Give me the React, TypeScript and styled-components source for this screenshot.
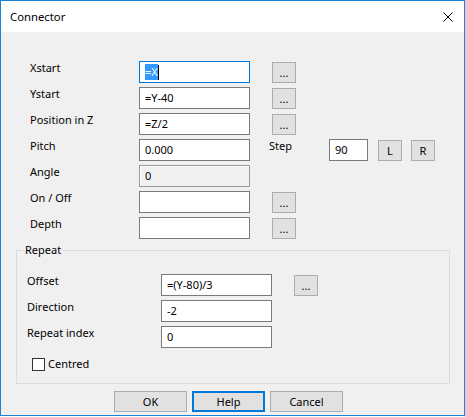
import React from "react";
import styled, { createGlobalStyle, css } from "styled-components";

const GlobalStyle = createGlobalStyle`
  html, body {
    margin: 0;
    padding: 0;
    background: #ffffff;
  }
  * {
    box-sizing: border-box;
  }
`;

const FONT = `"Noto Sans", "Liberation Sans", sans-serif`;

const Window = styled.div`
  width: 465px;
  height: 416px;
  border: 1px solid #1883d7;
  display: flex;
  flex-direction: column;
  font-family: ${FONT};
  font-size: 11px;
  color: #000;
  background: #f0f0f0;
`;

const TitleBar = styled.div`
  height: 31px;
  background: #ffffff;
  display: flex;
  align-items: center;
  justify-content: space-between;
  padding: 0 11px 0 9px;
  font-size: 11.3px;
`;

const CloseIcon = styled.svg`
  width: 10px;
  height: 10px;
  margin-top: 1px;
`;

const Body = styled.div`
  flex: 1;
  padding: 29px 0 0 0;
`;

const Form = styled.div`
  padding-left: 29px;
`;

const Row = styled.div`
  display: flex;
  align-items: flex-start;
  height: 22px;
  margin-bottom: 4px;
`;

const Label = styled.div<{ $width: number }>`
  width: ${(p) => p.$width}px;
  line-height: 14px;
  white-space: nowrap;
`;

const TextBox = styled.div<{ $width?: number; $focused?: boolean; $disabled?: boolean }>`
  width: ${(p) => p.$width ?? 111}px;
  height: 22px;
  border: 1px solid #7a7a7a;
  background: #ffffff;
  padding: 0 0 0 5px;
  display: flex;
  align-items: center;
  line-height: 14px;
  white-space: nowrap;
  ${(p) =>
    p.$focused &&
    css`
      border-color: #0078d7;
    `}
  ${(p) =>
    p.$disabled &&
    css`
      background: #f0f0f0;
      border-color: #9a9a9a;
      box-shadow: inset 1px 1px 0 #ffffff;
    `}
`;

const Selection = styled.span`
  background: #3399ff;
  color: #ffffff;
  padding: 1px 0;
`;

const Caret = styled.span`
  display: inline-block;
  width: 1px;
  height: 15px;
  background: #000;
`;

const PushButton = styled.button<{ $width?: number; $default?: boolean }>`
  width: ${(p) => p.$width ?? 24}px;
  height: 21px;
  padding: 0;
  background: #e1e1e1;
  border: 1px solid #adadad;
  border-radius: 0;
  font-family: ${FONT};
  font-size: 11px;
  color: #000;
  line-height: 14px;
  ${(p) =>
    p.$default &&
    css`
      border: 2px solid #0078d7;
    `}
`;

const SideButton = styled(PushButton)<{ $gap: number }>`
  margin-left: ${(p) => p.$gap}px;
  margin-top: 1px;
`;

const StepLabel = styled.div`
  margin-left: 19px;
  width: 60px;
  line-height: 14px;
`;

const Group = styled.fieldset`
  margin: 3px 0 0 15px;
  width: 434px;
  border: 1px solid #dcdcdc;
  padding: 17px 0 12px 10px;
`;

const Legend = styled.legend`
  margin-left: -3px;
  padding: 0 1px;
  line-height: 14px;
`;

const CheckRow = styled.label`
  display: flex;
  align-items: center;
  margin: 9px 0 0 5px;
  line-height: 14px;
`;

const CheckBox = styled.span`
  width: 13px;
  height: 13px;
  border: 1px solid #333333;
  background: #ffffff;
  margin-right: 3px;
`;

const ButtonBar = styled.div`
  display: flex;
  gap: 5px;
  margin: 7px 0 0 113px;
`;

const mainRows = [
  { label: "Xstart", value: "=X", focused: true, dots: true },
  { label: "Ystart", value: "=Y-40", dots: true },
  { label: "Position in Z", value: "=Z/2", dots: true },
  { label: "Pitch", value: "0.000", step: true },
  { label: "Angle", value: "0", disabled: true },
  { label: "On / Off", value: "", dots: true },
  { label: "Depth", value: "", dots: true },
];

const repeatRows = [
  { label: "Offset", value: "=(Y-80)/3", dots: true },
  { label: "Direction", value: "-2" },
  { label: "Repeat index", value: "0" },
];

export default function App() {
  return (
    <>
      <GlobalStyle />
      <Window>
        <TitleBar>
          <span>Connector</span>
          <CloseIcon viewBox="0 0 10 10">
            <path d="M0.5 0.5 L9.5 9.5 M9.5 0.5 L0.5 9.5" stroke="#000" strokeWidth="1" fill="none" />
          </CloseIcon>
        </TitleBar>
        <Body>
          <Form>
            {mainRows.map((r) => (
              <Row key={r.label}>
                <Label $width={109}>{r.label}</Label>
                <TextBox $focused={r.focused} $disabled={r.disabled}>
                  {r.focused ? (
                    <>
                      <Selection>{r.value}</Selection>
                      <Caret />
                    </>
                  ) : (
                    r.value
                  )}
                </TextBox>
                {r.dots && <SideButton $gap={22}>...</SideButton>}
                {r.step && (
                  <>
                    <StepLabel>Step</StepLabel>
                    <TextBox $width={39}>90</TextBox>
                    <SideButton $gap={10}>L</SideButton>
                    <SideButton $gap={9}>R</SideButton>
                  </>
                )}
              </Row>
            ))}
          </Form>
          <Group>
            <Legend>Repeat</Legend>
            {repeatRows.map((r) => (
              <Row key={r.label}>
                <Label $width={134}>{r.label}</Label>
                <TextBox>{r.value}</TextBox>
                {r.dots && <SideButton $gap={22}>...</SideButton>}
              </Row>
            ))}
            <CheckRow>
              <CheckBox />
              Centred
            </CheckRow>
          </Group>
          <ButtonBar>
            <PushButton $width={73}>OK</PushButton>
            <PushButton $width={73} $default>
              Help
            </PushButton>
            <PushButton $width={73}>Cancel</PushButton>
          </ButtonBar>
        </Body>
      </Window>
    </>
  );
}
